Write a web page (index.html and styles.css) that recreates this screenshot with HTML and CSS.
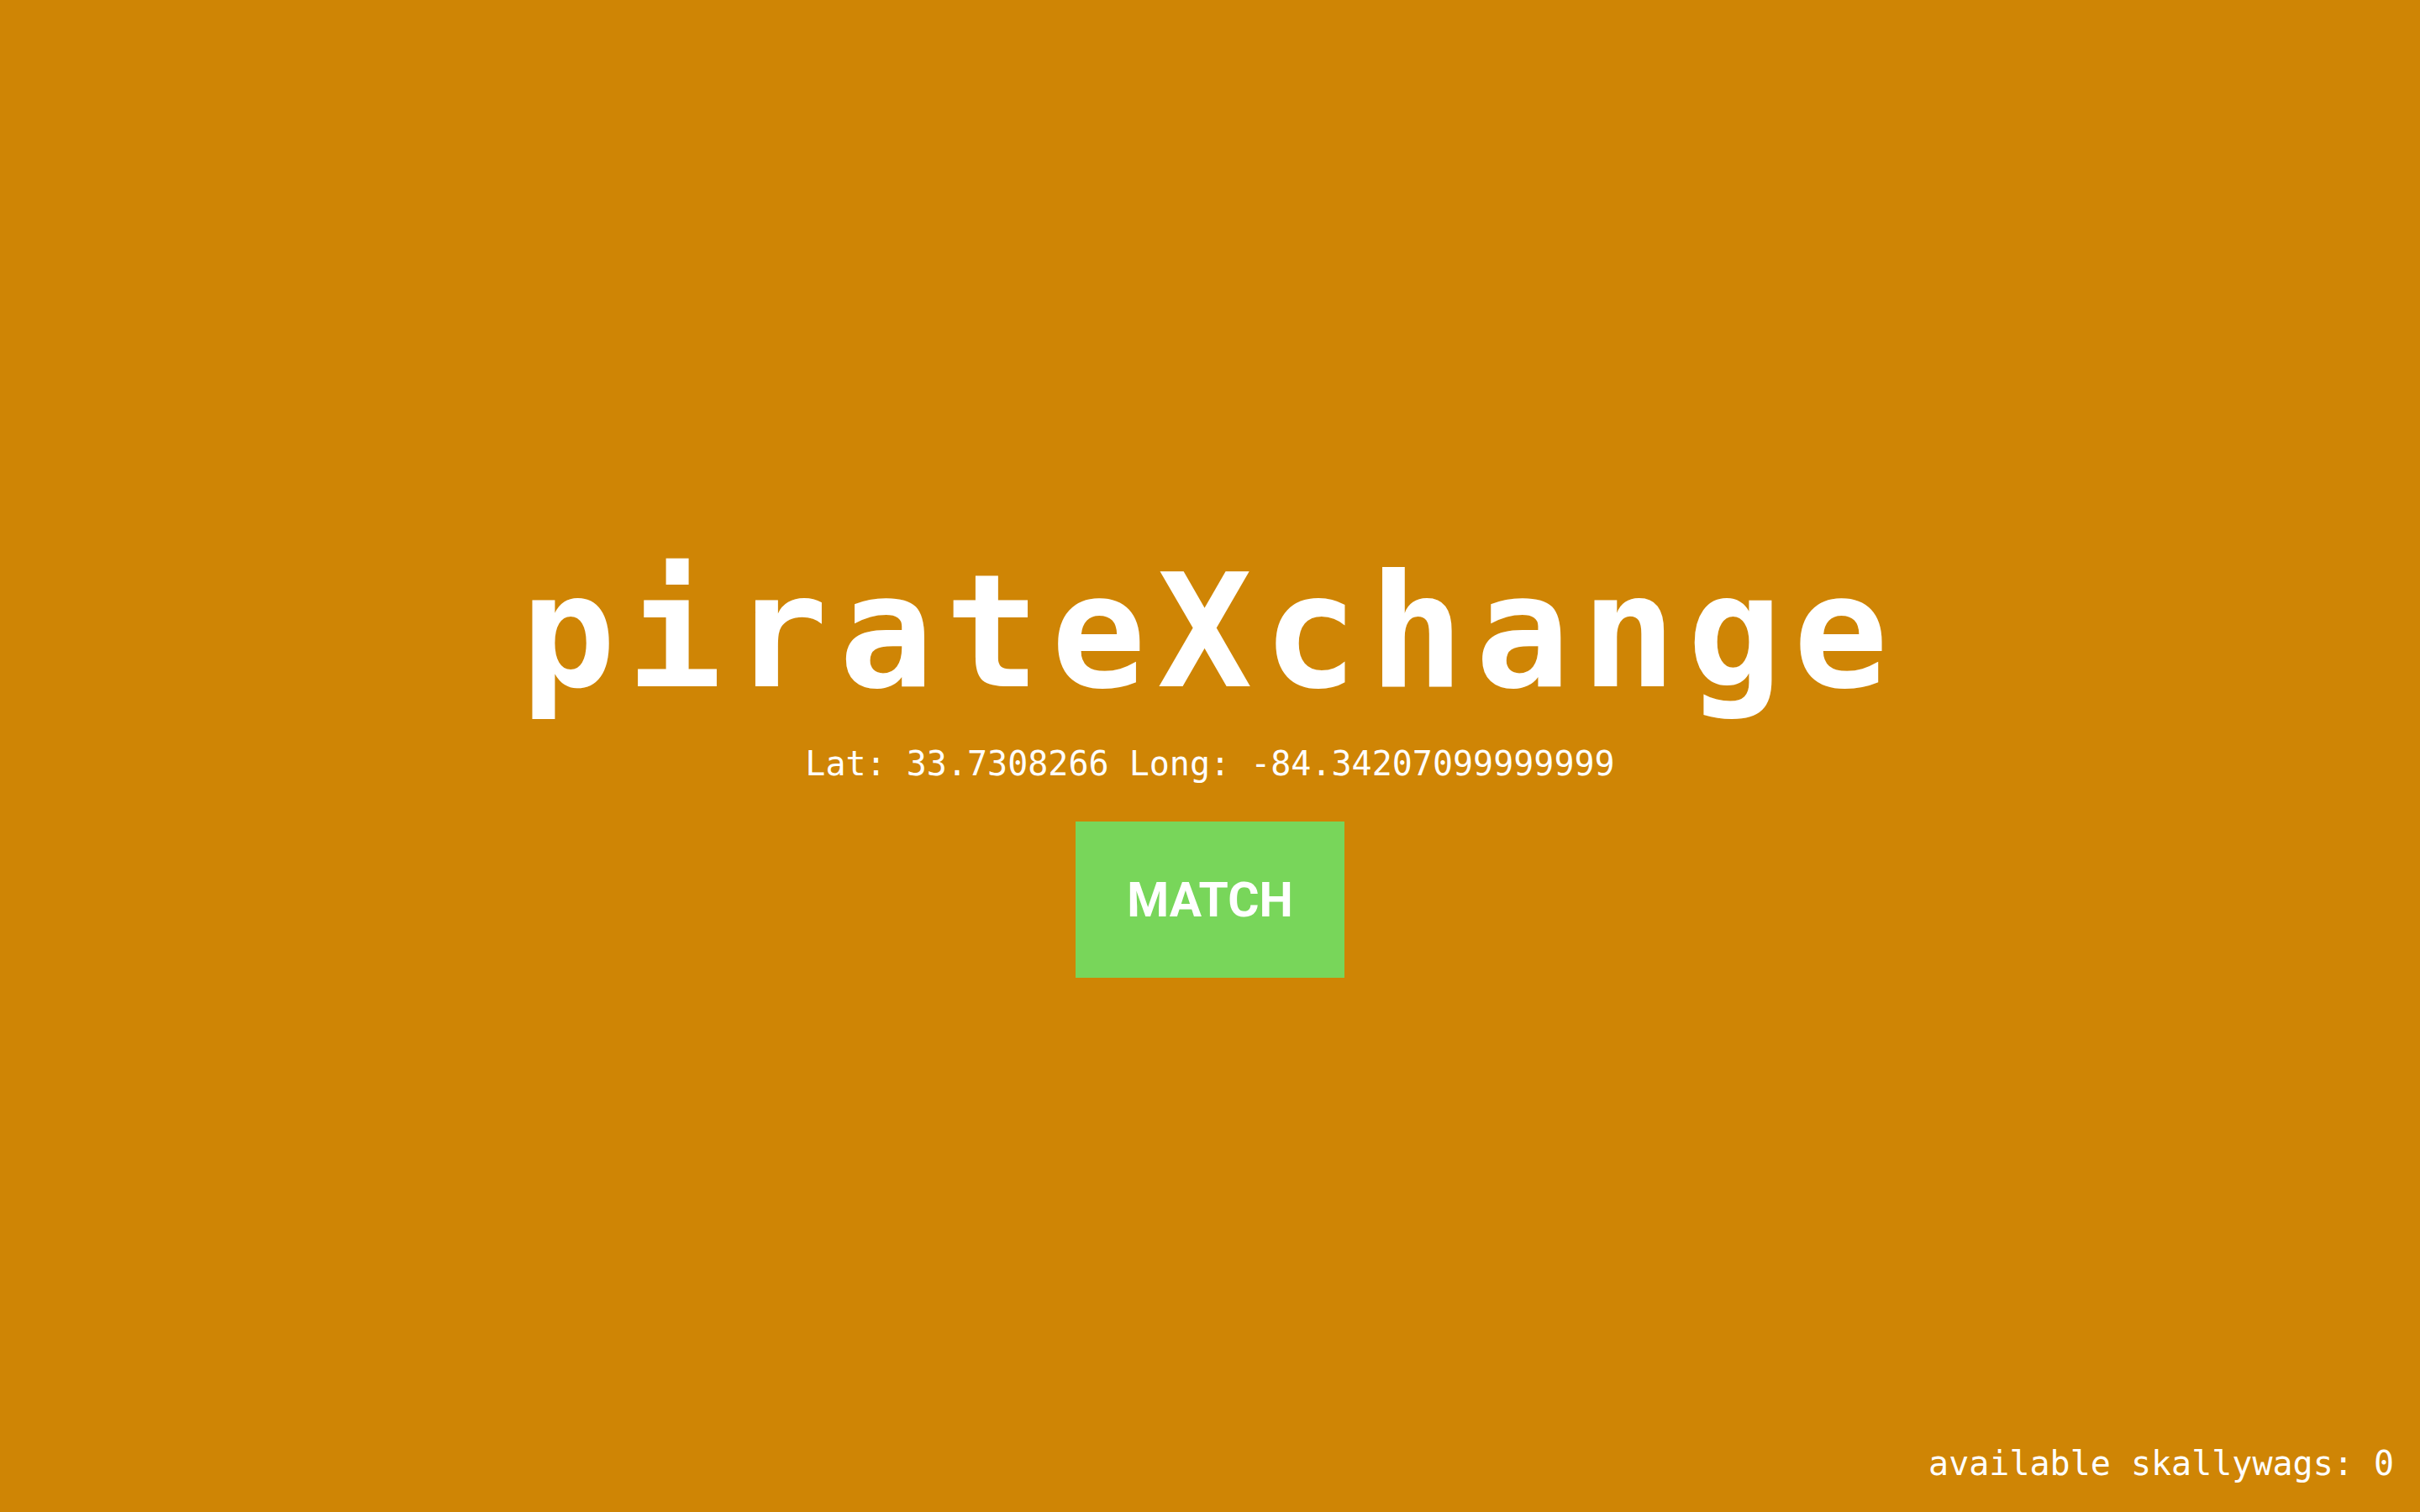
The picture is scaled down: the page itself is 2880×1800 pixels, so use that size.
FILE: index.html
```html
<!DOCTYPE html>
<html lang="en">
<head>
<meta charset="utf-8">
<title>pirateXchange</title>
<link rel="stylesheet" href="styles.css">
</head>
<body>
<main class="main">
  <h1 class="title">pirateXchange</h1>
  <p class="coords">Lat: 33.7308266 Long: -84.34207099999999</p>
  <button class="match-btn" type="button">MATCH</button>
</main>
<footer class="footer">available skallywags: 0</footer>
</body>
</html>
```
FILE: styles.css
```css
html, body {
  margin: 0;
  padding: 0;
}
body {
  background: #cf8505;
  color: #ffffff;
  height: 100vh;
  display: flex;
  flex-direction: column;
  font-family: "DejaVu Sans Mono", monospace;
  overflow: hidden;
}
.main {
  flex: 1;
  display: flex;
  flex-direction: column;
  align-items: center;
  padding-top: 659px;
}
.title {
  margin: 0;
  font-family: "DejaVu Sans Mono", monospace;
  font-weight: bold;
  font-size: 188px;
  line-height: 186px;
  letter-spacing: 13px;
}
.coords {
  margin: 44px 0 0;
  font-size: 40px;
  line-height: 40px;
}
.match-btn {
  margin-top: 49px;
  width: 320px;
  height: 186px;
  border: none;
  background: #78d65a;
  color: #ffffff;
  font-family: Roboto, "Liberation Sans", sans-serif;
  font-weight: bold;
  font-size: 57px;
  padding: 0;
  cursor: pointer;
}
.footer {
  text-align: right;
  font-size: 40px;
  line-height: 40px;
  padding: 0 31px 38px 0;
}
```
